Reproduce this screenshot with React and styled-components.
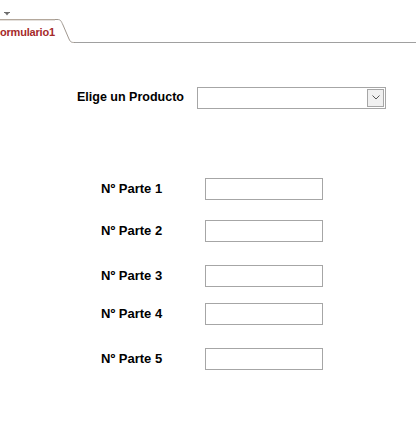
import React from "react";
import styled, { createGlobalStyle } from "styled-components";

const Global = createGlobalStyle`
  html, body { margin: 0; padding: 0; background: #ffffff; }
  body { font-family: "Liberation Sans", Arial, sans-serif; }
`;

const Page = styled.div`
  width: 416px;
  height: 421px;
  overflow: hidden;
  background: #fff;
`;

const TopArrow = styled.div`
  height: 19px;
  padding: 2px 0 0 4px;
  box-sizing: border-box;
`;

const TabBar = styled.div`
  display: flex;
  align-items: flex-end;
  height: 24px;
`;

const Tab = styled.div`
  height: 23px;
  width: 55px;
  border-top: 1px solid #b4a89c;
  box-shadow: inset 0 1px 0 #e4e0dc;
  display: flex;
  align-items: center;
  background: #fff;
`;

const TabText = styled.span`
  font-family: "Liberation Sans", Arial, sans-serif;
  font-weight: bold;
  font-size: 11px;
  color: #a52a2a;
  white-space: nowrap;
  letter-spacing: -0.2px;
`;

const Filler = styled.div`
  flex: 1;
  height: 1px;
  background: #a0a0a0;
`;

const Form = styled.div`
  display: flex;
  flex-direction: column;
  padding-top: 43px;
`;

const ProductRow = styled.div`
  display: flex;
  align-items: center;
  padding-left: 77px;
  height: 23px;
`;

const Label = styled.span`
  font-family: "Liberation Sans", Arial, sans-serif;
  font-weight: bold;
  font-size: ${(p) => p.$size || 13}px;
  color: #000;
  white-space: nowrap;
  width: ${(p) => p.$w}px;
  margin-top: -1px;
`;

const Combo = styled.div`
  display: flex;
  width: 189px;
  height: 22px;
  box-sizing: border-box;
  border: 1px solid #a6a6a6;
  background: #fff;
`;

const ComboField = styled.div`
  flex: 1;
`;

const ComboButton = styled.div`
  width: 15px;
  margin: 1px;
  border: 1px solid #a6a6a6;
  background: #f0f0f0;
  display: flex;
  align-items: center;
  justify-content: center;
`;

const Parts = styled.div`
  display: flex;
  flex-direction: column;
  padding-left: 101px;
  margin-top: 69px;
`;

const PartRow = styled.div`
  display: flex;
  align-items: center;
  height: 22px;
  margin-bottom: ${(p) => p.$gap}px;
`;

const TextBox = styled.div`
  width: 118px;
  height: 22px;
  box-sizing: border-box;
  border: 1px solid #a6a6a6;
  background: #fff;
`;

const parts = [
  { n: 1, gap: 20 },
  { n: 2, gap: 23 },
  { n: 3, gap: 16 },
  { n: 4, gap: 23 },
  { n: 5, gap: 0 },
];

export default function App() {
  return (
    <>
      <Global />
      <Page>
        <TopArrow>
          <svg width="6" height="4" viewBox="0 0 6 4">
            <rect x="0" y="0" width="6" height="1" fill="#6d6d6d" />
            <path d="M1 1 L5 1 L3 3.5 Z" fill="#6d6d6d" />
          </svg>
        </TopArrow>
        <TabBar>
          <Tab>
            <TabText>ormulario1</TabText>
          </Tab>
          <svg width="20" height="24" viewBox="0 0 20 24" style={{ display: "block" }}>
            <path
              d="M0 0.5 L2 0.5 C6 0.5 6 2 8 6 L14 20 C15.5 23 16 23.5 20 23.5"
              fill="none"
              stroke="#a09890"
              strokeWidth="1"
            />
          </svg>
          <Filler />
        </TabBar>
        <Form>
          <ProductRow>
            <Label $w={120} $size={12.5}>Elige un Producto</Label>
            <Combo>
              <ComboField />
              <ComboButton>
                <svg width="8" height="5" viewBox="0 0 8 5">
                  <path d="M0.5 0.5 L4 4 L7.5 0.5" fill="none" stroke="#555" strokeWidth="1" />
                </svg>
              </ComboButton>
            </Combo>
          </ProductRow>
          <Parts>
            {parts.map((p) => (
              <PartRow key={p.n} $gap={p.gap}>
                <Label $w={104}>Nº Parte {p.n}</Label>
                <TextBox />
              </PartRow>
            ))}
          </Parts>
        </Form>
      </Page>
    </>
  );
}
